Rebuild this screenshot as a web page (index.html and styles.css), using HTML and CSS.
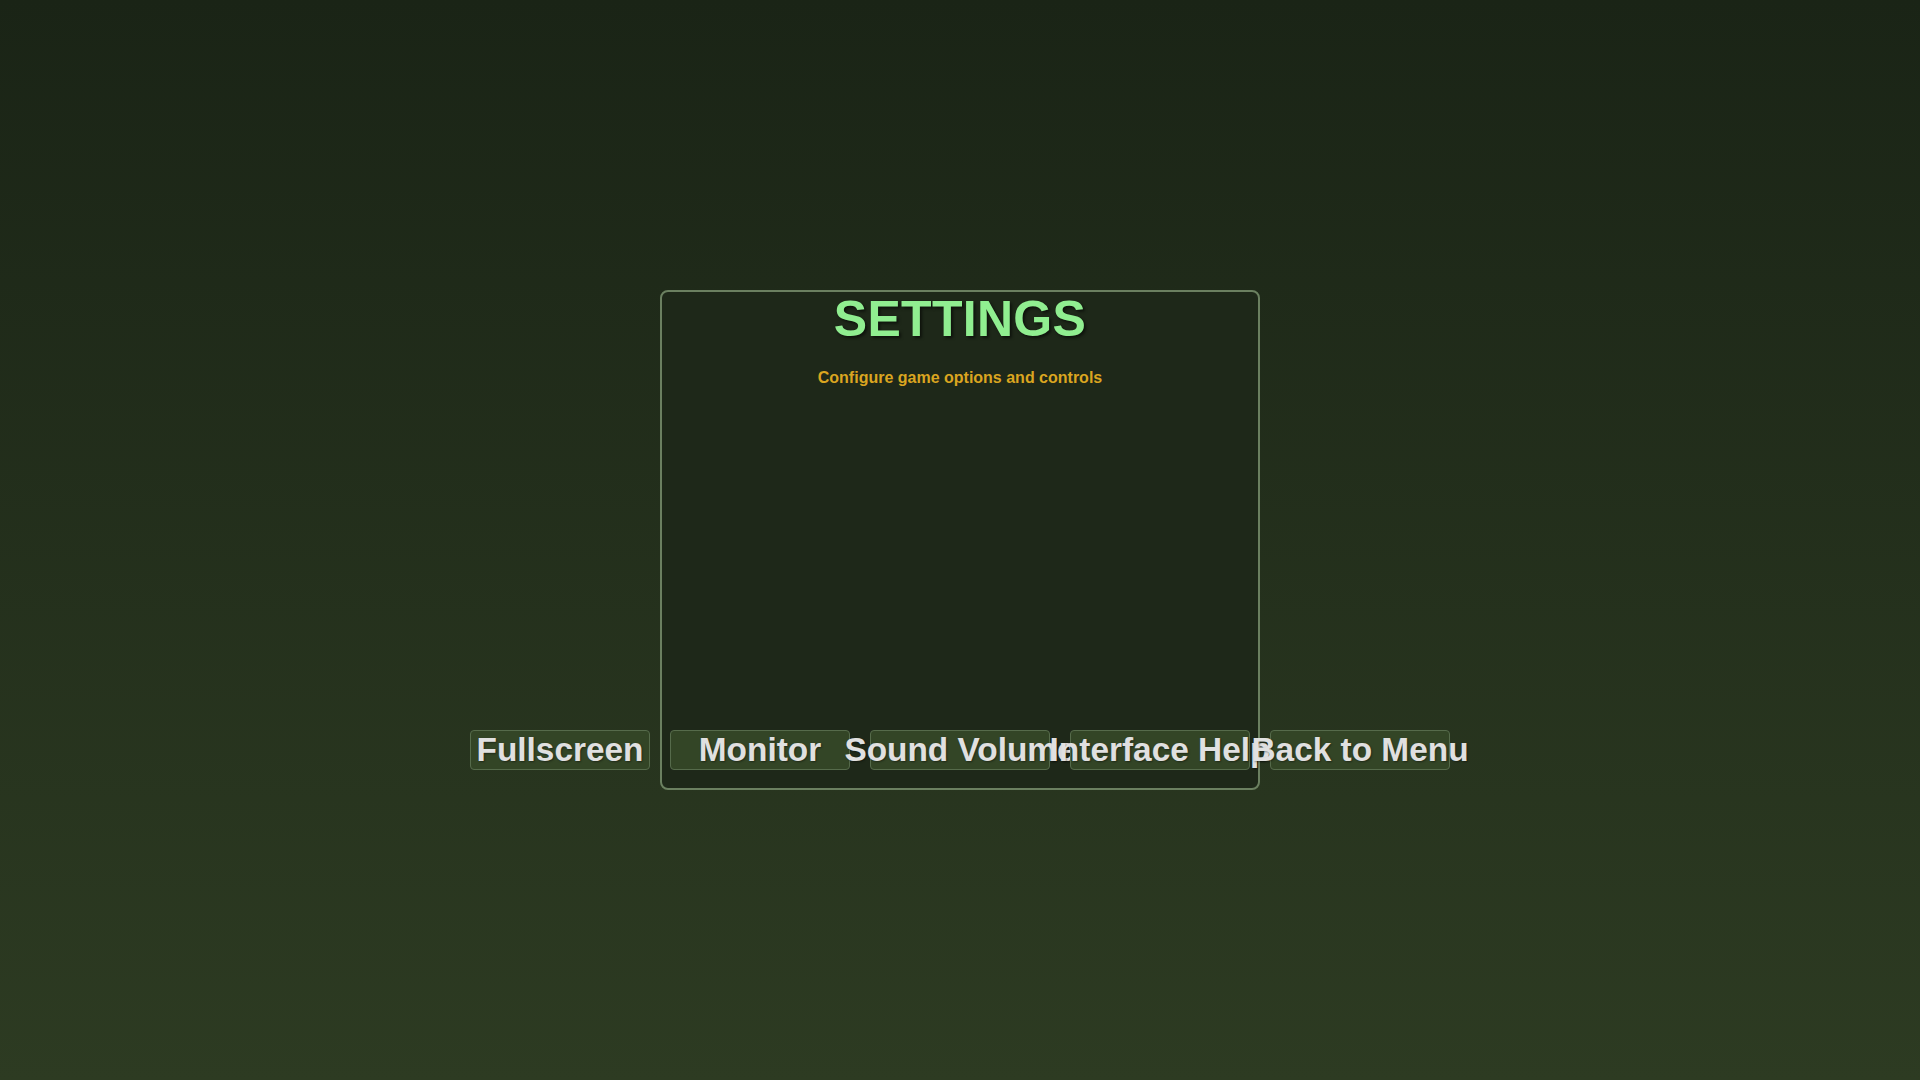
FILE: index.html
```html
<!DOCTYPE html>
<html lang="en">
<head>
<meta charset="utf-8">
<title>Settings</title>
<link rel="stylesheet" href="styles.css">
</head>
<body>
<main class="screen">
  <section class="panel">
    <h1 class="title">SETTINGS</h1>
    <p class="subtitle">Configure game options and controls</p>
    <div class="actions">
      <button class="btn">Fullscreen</button>
      <button class="btn">Monitor</button>
      <button class="btn">Sound Volume</button>
      <button class="btn">Interface Help</button>
      <button class="btn">Back to Menu</button>
    </div>
  </section>
</main>
</body>
</html>
```

FILE: styles.css
```css
html, body {
  margin: 0;
  padding: 0;
  height: 100%;
}

body {
  background: linear-gradient(180deg, #1a2416 0%, #2d3b22 100%);
  font-family: "Liberation Sans", Arial, sans-serif;
}

.screen {
  width: 100%;
  height: 100vh;
  display: flex;
  align-items: center;
  justify-content: center;
}

.panel {
  box-sizing: border-box;
  width: 600px;
  height: 500px;
  border: 2px solid #6b8060;
  border-radius: 8px;
  background: #1e2819;
  display: flex;
  flex-direction: column;
  align-items: center;
  padding: 0 0 18px;
}

.title {
  margin: 0;
  font-size: 50px;
  font-weight: 700;
  letter-spacing: 0.3px;
  line-height: 55px;
  color: #90ee90;
  text-shadow: 2px 2px 3px rgba(0, 0, 0, 0.55);
}

.subtitle {
  margin: 22px 0 0;
  font-size: 16px;
  font-weight: 700;
  line-height: normal;
  color: #daa520;
}

.actions {
  margin-top: auto;
  width: 100%;
  display: flex;
  justify-content: center;
  gap: 20px;
}

.btn {
  flex: 0 0 180px;
  width: 180px;
  height: 40px;
  box-sizing: border-box;
  padding: 0;
  border: 1px solid #566b4b;
  border-radius: 4px;
  background: #334526;
  color: #e0e0e0;
  font-family: "Liberation Sans", Arial, sans-serif;
  font-size: 33.4px;
  font-weight: 700;
  white-space: nowrap;
  display: flex;
  align-items: center;
  justify-content: center;
  text-shadow: 1px 1px 2px rgba(0, 0, 0, 0.4);
}
```
